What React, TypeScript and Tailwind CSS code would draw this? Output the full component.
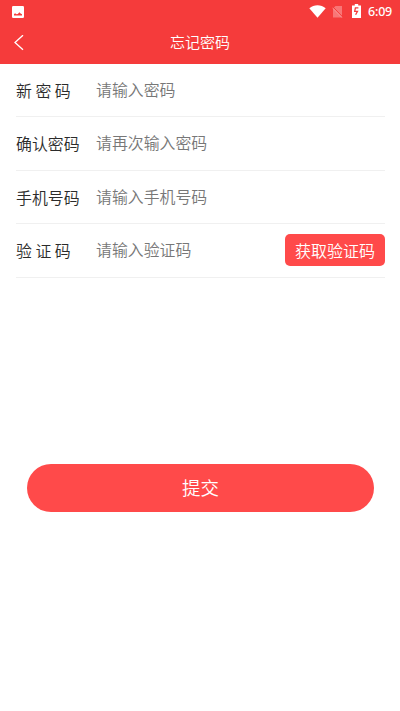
import { useState } from "react";

interface Field {
  name: string;
  label: string;
  placeholder: string;
  type: string;
}

const fields: Field[] = [
  { name: "password", label: "新 密 码", placeholder: "请输入密码", type: "password" },
  { name: "confirm", label: "确认密码", placeholder: "请再次输入密码", type: "password" },
  { name: "phone", label: "手机号码", placeholder: "请输入手机号码", type: "tel" },
  { name: "code", label: "验 证 码", placeholder: "请输入验证码", type: "text" },
];

function StatusBar() {
  return (
    <div className="flex h-6 items-center justify-between pl-3 pr-2">
      <svg className="h-3 w-3" viewBox="0 0 12 12">
        <rect width="12" height="12" rx="1.2" fill="#fff" />
        <path d="M2 9.4V8.2L3 7.2 4.6 8.2 5.8 8 7.4 6.2 8.6 7.4 10 8.2V9.4Z" fill="#f53b3b" />
      </svg>

      <div className="flex items-center">
        <svg className="mb-px h-[13px] w-[17px]" viewBox="0 0 17 13">
          <path d="M.3 3.3C5-.7 12-.7 16.7 3.3L8.5 12.8Z" fill="#fff" />
        </svg>
        <svg className="ml-[6px] h-3 w-[11px]" viewBox="0 0 11 12">
          <path d="M3.5 0H10V11.5H1V2.5Z" fill="#fff" fillOpacity=".3" />
          <path d="M.6 .6 10.8 11" stroke="#f53b3b" strokeWidth="1" />
          <path d="M0 1.4 10.2 11.8" stroke="#fff" strokeOpacity=".3" strokeWidth=".8" />
        </svg>
        <svg className="mb-[2px] ml-[9px] h-[14px] w-[9px]" viewBox="0 0 9 14">
          <path d="M2.8 0H6.2V1.4H9V14H0V1.4H2.8Z" fill="#fff" />
          <path
            d="M6.4 3.8H3.4L2.7 7.3H5.5L3.6 10.8"
            stroke="#f53b3b"
            strokeWidth="1.3"
            fill="none"
          />
        </svg>
        <span className="ml-[7px] w-6 whitespace-nowrap font-['Noto_Sans',sans-serif] text-[12.5px] font-medium leading-6 tracking-[-0.2px]">
          6:09
        </span>
      </div>
    </div>
  );
}

function App() {
  const [values, setValues] = useState<Record<string, string>>({});

  return (
    <main className="min-h-[711px] w-full bg-white font-['Noto_Sans_CJK_SC',sans-serif] font-[350]">
      <header className="h-16 bg-[#f53b3b] text-white">
        <StatusBar />
        <div className="grid h-[37px] grid-cols-[40px_1fr_40px] items-center">
          <button type="button" aria-label="返回" className="pl-[14px]">
            <svg className="h-4 w-[10px]" viewBox="0 0 10 16" fill="none">
              <path d="M9 .2 1 7.5 9 14.8" stroke="#fff" strokeWidth="1.3" />
            </svg>
          </button>
          <h1 className="text-center text-[15px]">忘记密码</h1>
        </div>
      </header>

      <form onSubmit={(e) => e.preventDefault()}>
        <div className="pl-4 pr-[15px]">
          {fields.map((field) => (
            <div
              key={field.name}
              className="flex h-[53.4px] items-center border-b border-[#f0f0f0]"
            >
              <label
                htmlFor={field.name}
                className="w-20 shrink-0 pt-[1.4px] text-[15.9px] text-[#2b2b2b]"
              >
                {field.label}
              </label>
              <input
                id={field.name}
                type={field.type}
                value={values[field.name] || ""}
                onChange={(e) =>
                  setValues({ ...values, [field.name]: e.target.value })
                }
                placeholder={field.placeholder}
                className="min-w-0 flex-1 pb-px text-[15.9px] outline-none placeholder:text-[#777777]"
              />
              {field.name === "code" && (
                <button
                  type="button"
                  className="h-8 w-[100px] shrink-0 rounded-[5px] bg-[#ff4a4a] text-base leading-8 text-white"
                >
                  获取验证码
                </button>
              )}
            </div>
          ))}
        </div>

        <button
          type="submit"
          className="ml-[27px] mt-[186px] h-12 w-[347px] rounded-full bg-[#ff4a4a] text-[18.5px] text-white"
        >
          提交
        </button>
      </form>
    </main>
  );
}

export default App;
